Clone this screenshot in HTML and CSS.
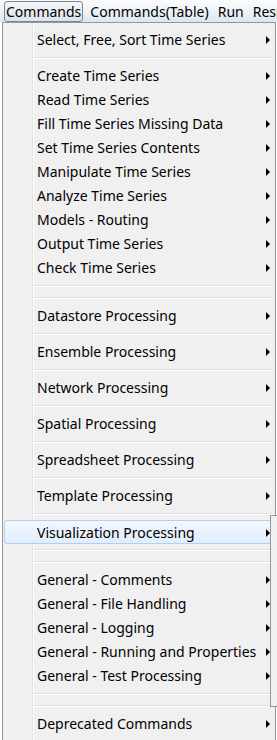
FILE: index.html
```html
<!DOCTYPE html>
<html lang="en">
<head>
    <meta charset="UTF-8">
    <title>Commands Menu</title>
    <link rel="stylesheet" href="styles.css">
</head>
<body>
    <div class="menubar">
        <span class="top active">Commands</span>
        <span class="top">Commands(Table)</span>
        <span class="top">Run</span>
        <span class="top">Results</span>
    </div>
    <div class="menu">
        <div class="item">Select, Free, Sort Time Series</div>
        <div class="sep"></div>
        <div class="item">Create Time Series</div>
        <div class="item">Read Time Series</div>
        <div class="item">Fill Time Series Missing Data</div>
        <div class="item">Set Time Series Contents</div>
        <div class="item">Manipulate Time Series</div>
        <div class="item">Analyze Time Series</div>
        <div class="item">Models - Routing</div>
        <div class="item">Output Time Series</div>
        <div class="item">Check Time Series</div>
        <div class="sep"></div>
        <div class="sep"></div>
        <div class="item">Datastore Processing</div>
        <div class="sep"></div>
        <div class="item">Ensemble Processing</div>
        <div class="sep"></div>
        <div class="item">Network Processing</div>
        <div class="sep"></div>
        <div class="item">Spatial Processing</div>
        <div class="sep"></div>
        <div class="item">Spreadsheet Processing</div>
        <div class="sep"></div>
        <div class="item">Template Processing</div>
        <div class="sep"></div>
        <div class="item hover">Visualization Processing</div>
        <div class="sep"></div>
        <div class="sep"></div>
        <div class="item">General - Comments</div>
        <div class="item">General - File Handling</div>
        <div class="item">General - Logging</div>
        <div class="item">General - Running and Properties</div>
        <div class="item">General - Test Processing</div>
        <div class="sep"></div>
        <div class="sep"></div>
        <div class="item">Deprecated Commands</div>
    </div>
    <div class="submenu"></div>
</body>
</html>
```

FILE: styles.css
```css
body {
    margin: 0;
    width: 277px;
    height: 740px;
    overflow: hidden;
    position: relative;
    background: #ffffff;
    font-family: "Noto Sans", "Open Sans", sans-serif;
    font-size: 14px;
    color: #000;
}
.menubar {
    height: 22px;
    display: flex;
    align-items: center;
    gap: 5px;
    padding-left: 4px;
    white-space: nowrap;
    overflow: hidden;
    background: linear-gradient(#fbfcfe 0%, #eef2f8 50%, #dde5f0 100%);
}
.top {
    padding: 0 1px;
    line-height: 19px;
    border: 1px solid transparent;
    border-radius: 3px;
}
.top.active {
    border-color: #7d8591;
    background: linear-gradient(#f4f6f9, #dde3eb);
}
.menu {
    margin-left: 2px;
    width: 272px;
    height: 712px;
    padding: 5px 0 0 0;
    border: 1px solid #979797;
    background: #f0f0f0;
    position: relative;
}
.menu::before {
    content: "";
    position: absolute;
    left: 29px;
    top: 0;
    bottom: 0;
    width: 1px;
    background: #e2e3e3;
    box-shadow: 1px 0 0 #ffffff;
}
.item {
    height: 24px;
    line-height: 23px;
    padding-left: 32px;
    margin: 0 1px;
    position: relative;
    white-space: nowrap;
    border: 1px solid transparent;
    border-width: 0 1px;
    border-radius: 3px;
    box-sizing: border-box;
}
.item::after {
    content: "";
    position: absolute;
    right: 3px;
    top: 8px;
    border-left: 4px solid #000;
    border-top: 4px solid transparent;
    border-bottom: 4px solid transparent;
}
.item.hover {
    border: 1px solid #aecff7;
    background: linear-gradient(#f2f7fe, #e3edfb);
}
.sep {
    height: 12px;
    margin-left: 31px;
    margin-right: 2px;
    position: relative;
}
.sep::before {
    content: "";
    position: absolute;
    left: 0;
    right: 0;
    top: 5px;
    height: 1px;
    background: #e0e0e0;
    box-shadow: 0 1px 0 #ffffff;
}
.submenu {
    position: absolute;
    left: 270px;
    top: 515px;
    width: 10px;
    height: 190px;
    border: 1px solid #979797;
    background: #f0f0f0;
}
```
